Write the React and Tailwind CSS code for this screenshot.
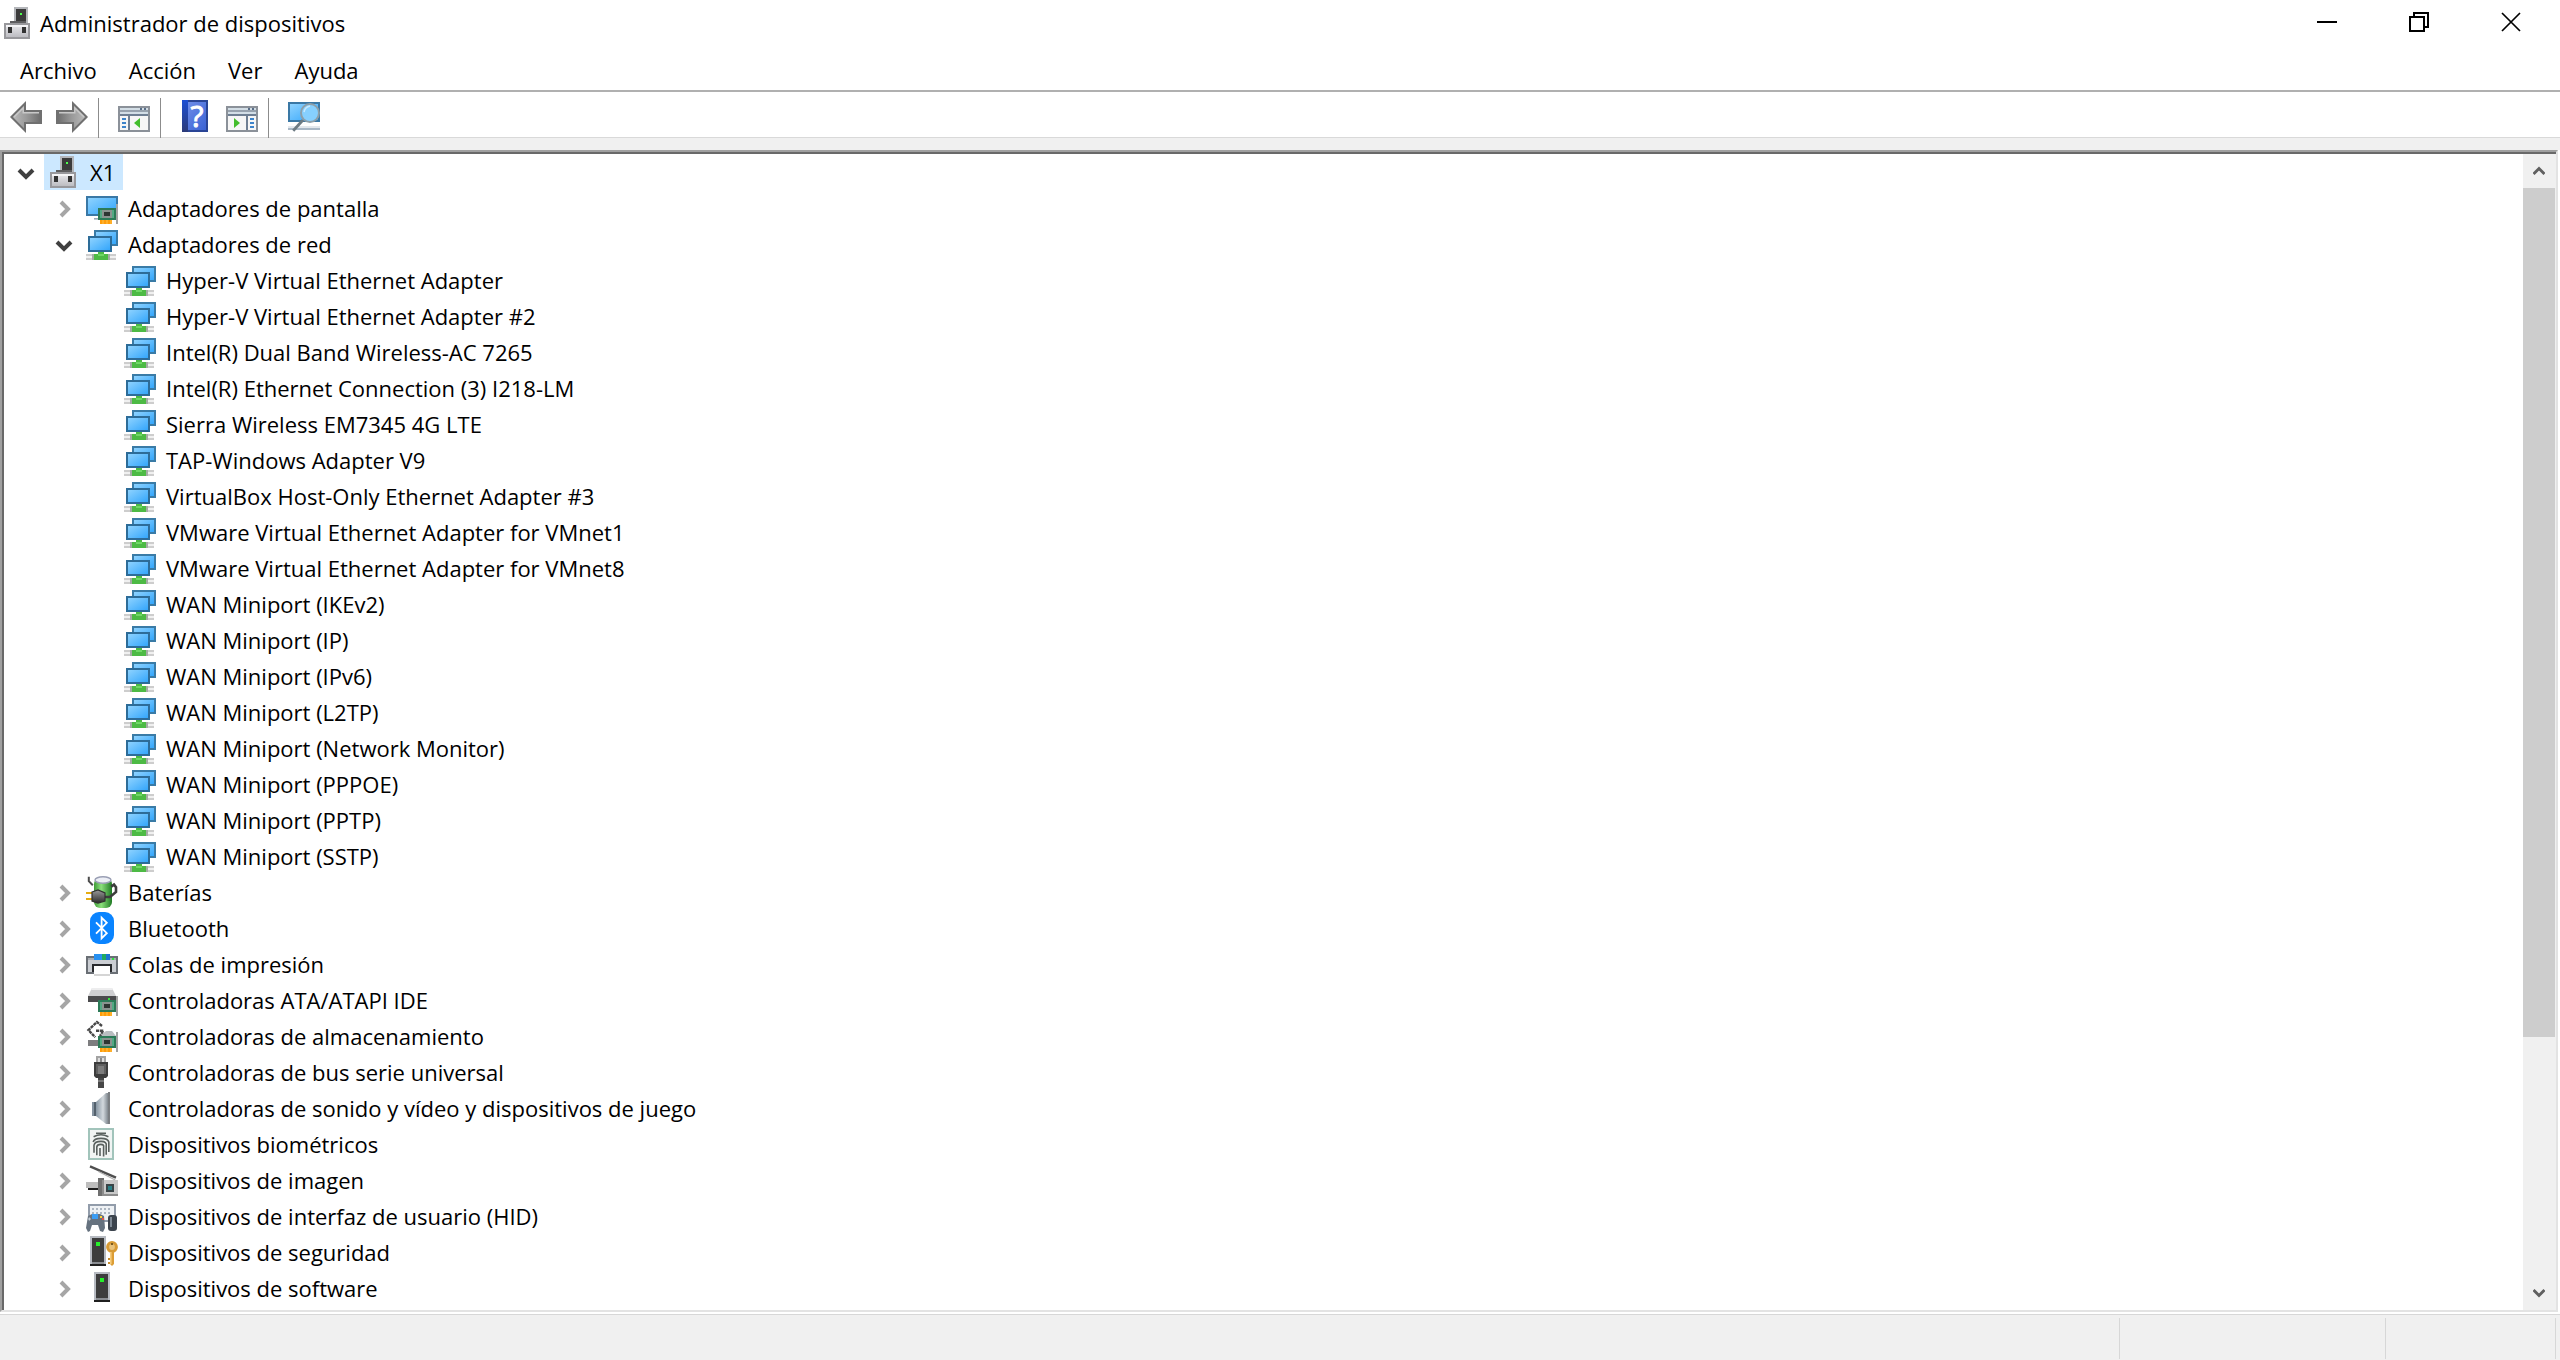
import { useState } from "react";

function Icon({ children, className = "" }) {
  return (
    <svg viewBox="0 0 16 16" className={`size-8 shrink-0 overflow-visible ${className}`} aria-hidden="true">
      {children}
    </svg>
  );
}

// gradients shared by all the icons
function Gradients() {
  return (
    <svg className="absolute size-0" aria-hidden="true">
      <defs>
        <linearGradient id="screen" x1="0" y1="0" x2="1" y2="1">
          <stop offset="0" stopColor="#93d5ff" />
          <stop offset="1" stopColor="#2ea3fb" />
        </linearGradient>
        <linearGradient id="metal" x1="0" y1="0" x2="0" y2="1">
          <stop offset="0" stopColor="#ececf0" />
          <stop offset="1" stopColor="#b9b9be" />
        </linearGradient>
        <linearGradient id="arrow" x1="0" y1="0" x2="1" y2="0">
          <stop offset="0" stopColor="#bdbdbd" />
          <stop offset="0.5" stopColor="#9a9a9a" />
          <stop offset="1" stopColor="#6c6c6c" />
        </linearGradient>
        <linearGradient id="book" x1="0" y1="0" x2="1" y2="1">
          <stop offset="0" stopColor="#7391ea" />
          <stop offset="1" stopColor="#3a62d4" />
        </linearGradient>
        <linearGradient id="spine" x1="0" y1="0" x2="0" y2="1">
          <stop offset="0" stopColor="#1c4fd4" />
          <stop offset="1" stopColor="#2b3a78" />
        </linearGradient>
        <linearGradient id="cell" x1="0" y1="0" x2="1" y2="0">
          <stop offset="0" stopColor="#3e9b36" />
          <stop offset="0.4" stopColor="#8be07c" />
          <stop offset="1" stopColor="#1f7a24" />
        </linearGradient>
        <linearGradient id="cone" x1="0" y1="0" x2="1" y2="0">
          <stop offset="0" stopColor="#8796a3" />
          <stop offset="0.5" stopColor="#d3d9de" />
          <stop offset="0.75" stopColor="#9aa2a9" />
          <stop offset="1" stopColor="#63686d" />
        </linearGradient>
        <linearGradient id="plug" x1="0" y1="0" x2="0" y2="1">
          <stop offset="0" stopColor="#9a9a9a" />
          <stop offset="1" stopColor="#2c2c2c" />
        </linearGradient>
      </defs>
    </svg>
  );
}

function ComputerIcon() {
  return (
    <Icon>
      <path d="M6 0h7v8H6z" fill="#b4b6ba" />
      <path d="M7 1h5v6H7z" fill="#3b3b3b" />
      <path d="M9 3h1v1H9z" fill="#4dff4d" />
      <path d="M4 7h8v1H4z" fill="#5e5e60" />
      <path d="M1.5 8.5h12v7h-12z" fill="url(#metal)" stroke="#98989c" />
      <path d="M2 9h11v1H2z" fill="#f5f5f7" />
      <path d="M3 10h2v3H3zM10 10h2v3h-2z" fill="#333" />
    </Icon>
  );
}

function Board() {
  return (
    <>
      <path d="M15 6h1v10h-1z" fill="#a3a3a3" />
      <path d="M6 8h9v6H6z" fill="#2c7a57" />
      <path d="M7 9h7v4H7z" fill="#52aa84" />
      <path d="M8 9h5v4H8z" fill="#8a938f" />
      <path d="M9 10h3v2H9z" fill="#2e3532" />
      <path d="M7 14h6v2H7z" fill="#ff9d0a" />
      <path d="M8.5 14v2M10.5 14v2M12.5 14v2" stroke="#ffc24a" strokeWidth="0.5" />
    </>
  );
}

function DisplayIcon() {
  return (
    <Icon>
      <path d="M0.5 2.5h15v9H0.5z" fill="url(#screen)" stroke="#3a78a5" />
      <path d="M4 13h3v0.8H4z" fill="#9aa9b8" />
      <Board />
    </Icon>
  );
}

function NetworkIcon() {
  return (
    <Icon>
      <path d="M4.5 1.5h11v7h-11z" fill="url(#screen)" stroke="#3a7ba6" />
      <path d="M0 13h15v3H0z" fill="#cdcdcd" />
      <path d="M0 14h15v1H0z" fill="#f0f0f0" />
      <path d="M3 13h1v3H3zM11 13h1v3h-1z" fill="#a4aba4" />
      <path d="M6 12h3v1h2v3H4v-3h2z" fill="#4dba45" />
      <path d="M6 13h3v1H6z" fill="#6fd765" />
      <path d="M1.5 4.5h11v7h-11z" fill="url(#screen)" stroke="#2d6c98" />
    </Icon>
  );
}

function BatteryIcon() {
  return (
    <Icon>
      <rect x="4" y="1" width="9" height="15" rx="3" fill="url(#cell)" />
      <ellipse cx="8.5" cy="2" rx="4" ry="1.6" fill="#edeff6" stroke="#9a9fb4" strokeWidth="0.7" />
      <path d="M1.4 0.4v2.2l2 2" fill="none" stroke="#4c4c4c" />
      <path d="M9 10.5h3l3-2.500V5.600l-1-1.300-1.400 1" fill="none" stroke="#3d3d3d" strokeWidth="1.300" />
      <path d="M0 8h3v1H0zM0 11h3v1H0z" fill="#e6ac12" />
      <path d="M3 8l3-1 3.500 1.500v4L6 13.500 3 12.500z" fill="url(#plug)" stroke="#303030" strokeWidth="0.600" />
    </Icon>
  );
}

function BluetoothIcon() {
  return (
    <Icon>
      <rect x="2" y="0" width="12" height="16" rx="4.5" fill="#0a84ff" />
      <path d="M5 5.2l5.400 5.400L7.800 13.200V2.800l2.600 2.600L5 10.800" fill="none" stroke="#fff" strokeWidth="0.900" />
    </Icon>
  );
}

function PrinterIcon() {
  return (
    <Icon>
      <path d="M0 4h16v9H0z" fill="#6a6f75" />
      <path d="M1 5h14v7H1z" fill="#cbced3" />
      <path d="M1 5h14v1H1z" fill="#a7abb1" />
      <path d="M4 3h8v3H4z" fill="#2790f0" />
      <path d="M8 3h2v3H8z" fill="#1fa95e" />
      <path d="M10 3h2v3h-2z" fill="#1a72d2" />
      <path d="M13 5h1v1h-1z" fill="#27e83c" />
      <path d="M3 8h10v4H3z" fill="#292b2e" />
      <path d="M4 9h8v5H4z" fill="#fff" />
      <path d="M4 13h8v1H4z" fill="#d5d5d5" />
    </Icon>
  );
}

function AtaIcon() {
  return (
    <Icon>
      <path d="M3 2h10l2 4H1z" fill="#cfcfd1" />
      <path d="M3 2h10l0.5 1h-11z" fill="#ededee" />
      <path d="M1 6h14v3H1z" fill="#4b4b4d" />
      <path d="M11 7h1v1h-1z" fill="#36e23d" />
      <Board />
    </Icon>
  );
}

function StorageIcon() {
  return (
    <Icon>
      <path d="M1 10h5v3H1z" fill="#7d7d7f" />
      <path d="M8 7l2-1.5h3L15 8H7z" fill="#b9bdc0" />
      <path d="M8 3L5.500 1 1.200 5l3.400 3.600M5 5.400h4M8.500 5.500L7 8" fill="none" stroke="#474747" strokeWidth="1.200" strokeDasharray="1.600 0.350" />
      <Board />
    </Icon>
  );
}

function UsbIcon() {
  return (
    <Icon>
      <path d="M5 0h5v4H5z" fill="#a3a3a3" />
      <path d="M6 1h3v3H6z" fill="#dcdcdc" />
      <path d="M7 1h1v2H7z" fill="#888" />
      <path d="M4 3h7v7l-1 1H5l-1-1z" fill="#3d3d3d" />
      <path d="M5 4h5v5H5z" fill="#5f5f5f" />
      <path d="M6 5h3v4H6z" fill="#7c7c7c" />
      <path d="M6 11h3v5H6z" fill="#474747" />
      <path d="M6 12h3v1H6z" fill="#777" />
    </Icon>
  );
}

function SpeakerIcon() {
  return (
    <Icon>
      <path d="M3 5h3v7H3z" fill="#53606c" />
      <path d="M3 5h1v7H3z" fill="#8593a0" />
      <path d="M5 5l5-4.5h2v15.5h-2L5 12z" fill="url(#cone)" />
      <path d="M11 0h1v16h-1z" fill="#7b7f83" />
    </Icon>
  );
}

function FingerprintIcon() {
  return (
    <Icon>
      <path d="M1.5 0.5h12v15h-12z" fill="#f1f4f3" stroke="#a2c4bb" />
      <g fill="none" stroke="#59605e" strokeWidth="0.8">
        <path d="M5 2.6h5M3.8 4.4Q7.5 2.4 11.2 4.4M3.6 7Q4 5.2 7.5 5.2T11.4 7v5" />
        <path d="M4 12.4V8.6Q4.4 6.7 7.5 6.7T10.1 9v4.4" />
        <path d="M5.4 13.6V9.4Q5.6 8.2 7.4 8.2T8.8 9.6v4.6M7 10v4" />
      </g>
    </Icon>
  );
}

function CameraIcon() {
  return (
    <Icon>
      <path d="M2 1.2L15 6.8" stroke="#4f4f4f" strokeWidth="1.2" />
      <path d="M6 3.6L14.6 8" stroke="#b0b0b0" strokeWidth="0.6" />
      <path d="M0 9h6v3H0z" fill="#bdbdbd" />
      <path d="M1 12h5v1H1z" fill="#1d1d1d" />
      <path d="M6 7h3v9H6z" fill="#6f6f6f" />
      <path d="M8 8h8v8H8z" fill="#8c8c8c" />
      <path d="M9 8h7v7H9z" fill="#c9c9c9" />
      <path d="M10 10h4v4h-4z" fill="#394447" />
      <path d="M11 11h2v2h-2z" fill="#2a8087" />
    </Icon>
  );
}

function HidIcon() {
  return (
    <Icon>
      <path d="M1.5 2.5h13v8h-13z" fill="#eef1f4" stroke="#929caa" />
      <path d="M3 4.5h10M3 6.5h10" stroke="#adb6c1" strokeDasharray="1 1" />
      <path d="M1 8l2-1h4l2 1 0.5 6-1 2-1.5-0.5-1-3h-3l-1 3L1 16l-1-2z" fill="#66727f" />
      <path d="M3 7h3v2.5H3z" fill="#3c9df4" />
      <path d="M7 8h1v1H7z" fill="#ffd33a" />
      <path d="M8 9h1v1H8z" fill="#e5534b" />
      <path d="M1 9.5h1.5M1.7 8.8v1.5" stroke="#c5ced6" strokeWidth="0.6" />
      <rect x="11" y="7.5" width="4.5" height="8" rx="1.5" fill="#3c444d" />
      <path d="M12 8.5h1v5h-1z" fill="#7f8a95" />
    </Icon>
  );
}

function Tower() {
  return (
    <>
      <path d="M4 0h8v15H4z" fill="#b7bbc2" />
      <path d="M5 1h6v12H5z" fill="#3d3d3d" />
      <path d="M7 3h2v2H7z" fill="#25ef2a" />
      <path d="M5 13h6v1H5z" fill="#8a8d92" />
      <path d="M4 14h8v1H4z" fill="#1f1f1f" />
    </>
  );
}

function SecurityIcon() {
  return (
    <Icon>
      <g transform="translate(-2 0)">
        <Tower />
      </g>
      <circle cx="13" cy="5.5" r="2.200" fill="#e9c27a" stroke="#d79a35" strokeWidth="1.500" />
      <path d="M12.500 3.500h1v1h-1z" fill="#7b5a20" />
      <path d="M12 8h2v6l-1 1-1-1z" fill="#dc9d35" />
      <path d="M12 8h0.800v6H12z" fill="#f5cc7c" />
      <path d="M11 11h1v1h-1zM11 13h1v1h-1z" fill="#c78b2b" />
    </Icon>
  );
}

function SoftwareIcon() {
  return (
    <Icon>
      <Tower />
    </Icon>
  );
}

function ArrowIcon({ className }) {
  return (
    <Icon className={className}>
      <path d="M0.7 8.5l6.8-6.8v3.8h8v6h-8v3.800z" fill="url(#arrow)" stroke="#707070" />
      <path d="M2 8.500L6.600 4v2.400h7.900" fill="none" stroke="#c9c9c9" strokeWidth="0.700" />
    </Icon>
  );
}

function PaneIcon({ side }) {
  return (
    <Icon>
      <path d="M0 3h16v13H0z" fill="#8b9199" />
      <path d="M1 4h14v1H1zM1 6h14v1H1z" fill="#d3dee6" />
      <path d="M1 5h14v1H1z" fill="#97a2ae" />
      <path d="M11 4h1v1h-1zM13 4h1v1h-1z" fill="#596e88" />
      <path d="M1 7h14v1H1z" fill="#6f7f93" />
      <path d="M1 8h14v7H1z" fill="#f6f6f6" />
      {side === "left" ? (
        <>
          <path d="M5 8h1v7H5z" fill="#6f7f93" />
          <path d="M2 9h2v1H2zM2 11h2v1H2zM2 13h2v1H2z" fill="#3d84cb" />
          <path d="M8 11.5L11 9v5z" fill="#43bd2c" />
        </>
      ) : (
        <>
          <path d="M10 8h1v7h-1z" fill="#6f7f93" />
          <path d="M12 9h2v1h-2zM12 11h2v1h-2zM12 13h2v1h-2z" fill="#3d84cb" />
          <path d="M7 11.5L4 9v5z" fill="#43bd2c" />
        </>
      )}
    </Icon>
  );
}

function HelpIcon() {
  return (
    <Icon>
      <path d="M1 0h13v16H1z" fill="#2a4596" />
      <path d="M2 1h11v14H2z" fill="url(#book)" />
      <path d="M1 0h3v16H1z" fill="url(#spine)" />
      <text x="8.5" y="13.5" textAnchor="middle" fontSize="15" fill="#fff" stroke="#fff" strokeWidth="0.5" fontFamily="Open Sans, sans-serif">
        ?
      </text>
    </Icon>
  );
}

function ScanIcon() {
  return (
    <Icon>
      <path d="M0.5 1.5h15v9H0.5z" fill="url(#screen)" stroke="#3a78a5" />
      <path d="M0 13h16v2H0z" fill="#a9b8c6" />
      <path d="M0 13h16v1H0z" fill="#e3e8ed" />
      <path d="M7.5 10L2.6 15.4" stroke="#6d7b83" strokeWidth="1.4" />
      <circle cx="11" cy="6.5" r="4.5" fill="#86d0ff" stroke="#8d9fa9" />
      <path d="M8 6q0.5-2.5 3-3" fill="none" stroke="#c6e9ff" strokeWidth="0.8" />
    </Icon>
  );
}

const adapters = [
  "Hyper-V Virtual Ethernet Adapter",
  "Hyper-V Virtual Ethernet Adapter #2",
  "Intel(R) Dual Band Wireless-AC 7265",
  "Intel(R) Ethernet Connection (3) I218-LM",
  "Sierra Wireless EM7345 4G LTE",
  "TAP-Windows Adapter V9",
  "VirtualBox Host-Only Ethernet Adapter #3",
  "VMware Virtual Ethernet Adapter for VMnet1",
  "VMware Virtual Ethernet Adapter for VMnet8",
  "WAN Miniport (IKEv2)",
  "WAN Miniport (IP)",
  "WAN Miniport (IPv6)",
  "WAN Miniport (L2TP)",
  "WAN Miniport (Network Monitor)",
  "WAN Miniport (PPPOE)",
  "WAN Miniport (PPTP)",
  "WAN Miniport (SSTP)",
];

const categories = [
  { name: "Adaptadores de pantalla", icon: DisplayIcon },
  { name: "Adaptadores de red", icon: NetworkIcon, items: adapters },
  { name: "Baterías", icon: BatteryIcon },
  { name: "Bluetooth", icon: BluetoothIcon },
  { name: "Colas de impresión", icon: PrinterIcon },
  { name: "Controladoras ATA/ATAPI IDE", icon: AtaIcon },
  { name: "Controladoras de almacenamiento", icon: StorageIcon },
  { name: "Controladoras de bus serie universal", icon: UsbIcon },
  { name: "Controladoras de sonido y vídeo y dispositivos de juego", icon: SpeakerIcon },
  { name: "Dispositivos biométricos", icon: FingerprintIcon },
  { name: "Dispositivos de imagen", icon: CameraIcon },
  { name: "Dispositivos de interfaz de usuario (HID)", icon: HidIcon },
  { name: "Dispositivos de seguridad", icon: SecurityIcon },
  { name: "Dispositivos de software", icon: SoftwareIcon },
];

function Chevron({ open, label, onClick }) {
  return (
    <button type="button" aria-label={label} aria-expanded={open} onClick={onClick} className="flex h-9 w-11 shrink-0 items-center justify-center">
      <svg viewBox="0 0 24 24" className="size-6" fill="none" strokeWidth="4" aria-hidden="true">
        {open ? <path d="M5 10l7 7 7-7" stroke="#404040" /> : <path d="M9 6l7 7-7 7" stroke="#a6a6a6" />}
      </svg>
    </button>
  );
}

function Row({ icon: RowIcon, name, open, onToggle, selected }) {
  return (
    <div className="flex h-9 items-center">
      {onToggle ? <Chevron open={open} label={name} onClick={onToggle} /> : <span className="w-11 shrink-0" />}
      <div className={`-ml-1 flex h-9 items-center gap-2.5 pl-1 pr-2 ${selected ? "bg-[#cce8ff]" : ""}`}>
        <RowIcon />
        <span className="whitespace-nowrap">{name}</span>
      </div>
    </div>
  );
}

function Tree() {
  const [rootOpen, setRootOpen] = useState(true);
  const [open, setOpen] = useState({ "Adaptadores de red": true });

  const toggle = (name) => setOpen({ ...open, [name]: !open[name] });

  return (
    <ul className="min-w-0 flex-1 overflow-hidden">
      <li>
        <Row icon={ComputerIcon} name="X1" open={rootOpen} onToggle={() => setRootOpen(!rootOpen)} selected />
        {rootOpen && (
          <ul className="pl-[38px]">
            {categories.map((c) => (
              <li key={c.name}>
                <Row icon={c.icon} name={c.name} open={!!open[c.name]} onToggle={() => toggle(c.name)} />
                {open[c.name] && c.items && (
                  <ul className="pl-[38px]">
                    {c.items.map((item) => (
                      <li key={item}>
                        <Row icon={c.icon} name={item} />
                      </li>
                    ))}
                  </ul>
                )}
              </li>
            ))}
          </ul>
        )}
      </li>
    </ul>
  );
}

function ScrollBar() {
  return (
    <div className="flex w-[33px] shrink-0 flex-col bg-[#f0f0f0] pr-px">
      <button type="button" aria-label="Subir" className="flex h-[34px] shrink-0 items-center justify-center">
        <svg viewBox="0 0 12 10" className="h-2.5 w-3" aria-hidden="true">
          <path d="M0.5 8L6 2.5 11.5 8" fill="none" stroke="#606060" strokeWidth="3" />
        </svg>
      </button>
      <div className="flex-1">
        <div className="h-[78%] bg-[#cdcdcd]" />
      </div>
      <button type="button" aria-label="Bajar" className="flex h-[34px] shrink-0 items-center justify-center">
        <svg viewBox="0 0 12 10" className="h-2.5 w-3" aria-hidden="true">
          <path d="M0.5 2L6 7.5 11.5 2" fill="none" stroke="#606060" strokeWidth="3" />
        </svg>
      </button>
    </div>
  );
}

function ToolButton({ label, children }) {
  return (
    <button type="button" aria-label={label} className="flex h-full w-[46px] items-center justify-center">
      {children}
    </button>
  );
}

function Separator() {
  return <div className="ml-[3px] mr-3 mt-1 h-10 w-px bg-[#8c8c8c]" />;
}

function TitleBar() {
  return (
    <header className="flex h-[50px] shrink-0 items-center pb-1 pl-0.5 pr-[3px]">
      <ComputerIcon />
      <h1 className="flex-1 pl-1.5">Administrador de dispositivos</h1>
      <div className="flex self-start">
        <button type="button" aria-label="Minimizar" className="flex h-11 w-[92px] items-center justify-center">
          <svg viewBox="0 0 20 20" className="size-5" aria-hidden="true">
            <path d="M0 10h20" stroke="#000" strokeWidth="2" />
          </svg>
        </button>
        <button type="button" aria-label="Restaurar" className="flex h-11 w-[92px] items-center justify-center">
          <svg viewBox="0 0 20 20" className="size-5" fill="none" stroke="#000" strokeWidth="2" aria-hidden="true">
            <path d="M1 5h14v14H1zM5 5V1h14v14h-4" />
          </svg>
        </button>
        <button type="button" aria-label="Cerrar" className="flex h-11 w-[92px] items-center justify-center">
          <svg viewBox="0 0 20 20" className="size-5" aria-hidden="true">
            <path d="M1 1l18 18M19 1L1 19" stroke="#000" strokeWidth="1.7" />
          </svg>
        </button>
      </div>
    </header>
  );
}

export default function App() {
  return (
    <div className="flex h-screen flex-col bg-white font-['Open_Sans',sans-serif] text-[22px] leading-9 text-black">
      <Gradients />
      <TitleBar />

      <nav className="flex h-[42px] shrink-0 items-center border-b-2 border-[#b0b0b0] pl-1">
        <button type="button" className="px-4">Archivo</button>
        <button type="button" className="px-4">Acción</button>
        <button type="button" className="px-4">Ver</button>
        <button type="button" className="px-4">Ayuda</button>
      </nav>

      <div className="flex h-[46px] shrink-0 border-b border-[#d9d9d9] pl-[3px] pt-0.5">
        <ToolButton label="Atrás">
          <ArrowIcon />
        </ToolButton>
        <ToolButton label="Adelante">
          <ArrowIcon className="-scale-x-100" />
        </ToolButton>
        <Separator />
        <ToolButton label="Mostrar árbol">
          <PaneIcon side="left" />
        </ToolButton>
        <Separator />
        <ToolButton label="Ayuda">
          <HelpIcon />
        </ToolButton>
        <ToolButton label="Mostrar acciones">
          <PaneIcon side="right" />
        </ToolButton>
        <Separator />
        <ToolButton label="Buscar cambios de hardware">
          <ScanIcon />
        </ToolButton>
      </div>

      <div className="h-3 shrink-0 bg-[#f0f0f0]" />

      <main className="mb-0.5 mr-0.5 flex min-h-0 flex-1 border-2 border-b-[#e3e3e3] border-l-[#a0a0a0] border-r-[#e3e3e3] border-t-[#a0a0a0]">
        <div className="flex min-w-0 flex-1 border-l-2 border-t-2 border-[#696969]">
          <Tree />
          <ScrollBar />
        </div>
      </main>

      <footer className="flex h-[46px] shrink-0 border-t border-[#d7d7d7] bg-[#f0f0f0] pr-1 pt-[3px]">
        <div className="mb-px flex-1 border-r border-[#d7d7d7]" />
        <div className="mb-px w-[266px] border-r border-[#d7d7d7]" />
        <div className="mb-px w-[170px] border-r border-[#d7d7d7]" />
      </footer>
    </div>
  );
}
